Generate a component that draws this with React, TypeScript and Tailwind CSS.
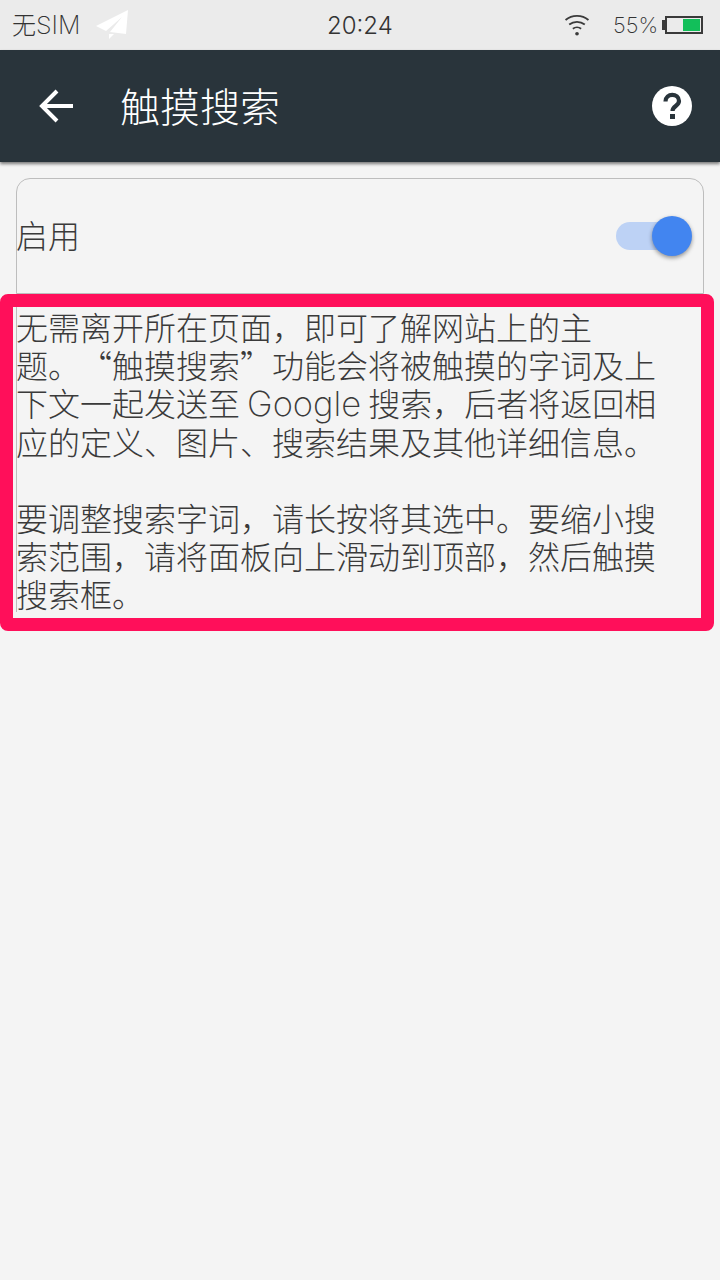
const cjk = "font-['Noto_Sans_CJK_SC','Roboto',sans-serif]";
const latin = "font-['Inter','Noto_Sans_CJK_SC',sans-serif]";

function Plane() {
  return (
    <svg width="34" height="30" viewBox="0 0 34 30" className="ml-[16px]">
      <path d="M32 0 L0 16 L10 21 L26 7 L14 22 L30 24 Z" fill="#ffffff" />
      <path d="M13 24 L18 24 L13 29 Z" fill="#ffffff" />
    </svg>
  );
}

function Wifi() {
  return (
    <svg width="26" height="22" viewBox="0 0 28 24" fill="none" stroke="#3a3a3a" strokeWidth="2">
      <path d="M1.5 6.5 C8.5 0.5 19.5 0.5 26.5 6.5" />
      <path d="M5.5 11.5 C10.5 7.5 17.5 7.5 22.5 11.5" />
      <path d="M9.5 16 C12 14 16 14 18.5 16" />
      <circle cx="14" cy="21.5" r="2" fill="#3a3a3a" stroke="none" />
    </svg>
  );
}

function Battery() {
  return (
    <div className="flex items-center ml-[4px]">
      <div className="w-[3px] h-[10px] bg-[#3a3a3a]" />
      <div className="w-[38px] h-[18px] border-[2px] border-[#3a3a3a] flex justify-end p-[1px]">
        <div className="w-[17px] h-full bg-[#12bf5a]" />
      </div>
    </div>
  );
}

export default function App() {
  return (
    <div lang="zh-CN" className={`relative w-[720px] h-[1280px] bg-[#f4f4f4] overflow-hidden [text-spacing-trim:space-all] ${cjk}`}>
      <div className="h-[50px] bg-[#ebebeb] flex items-center pl-[12px] pr-[17px] relative text-[#333333]">
        <div className="flex items-center w-[315px]">
          <span className="text-[24px] font-light leading-none">
            无<span className={`text-[25px] font-extralight ${latin}`}>SIM</span>
          </span>
          <Plane />
        </div>
        <span className={`text-[24px] font-light w-[64px] text-center mt-[2px] ${latin}`}>20:24</span>
        <div className="ml-auto flex items-center">
          <Wifi />
          <span className={`text-[22px] font-extralight ml-[23px] mt-[1px] ${latin}`}>55%</span>
          <Battery />
        </div>
      </div>
      <div className="h-[112px] bg-[#29343b] flex items-center shadow-[0_2px_3px_rgba(0,0,0,0.5)] relative">
        <svg width="36" height="36" viewBox="0 0 36 36" fill="none" stroke="#ffffff" strokeWidth="4" className="ml-[39px]">
          <path d="M34 18 H3" />
          <path d="M18 3 L3 18 L18 33" />
        </svg>
        <span className="text-[40px] font-extralight text-white ml-[45px] leading-none mb-[2px]">触摸搜索</span>
        <svg width="40" height="40" viewBox="0 0 40 40" className="ml-auto mr-[28px]">
          <circle cx="20" cy="20" r="20" fill="#ffffff" />
          <path d="M13.5 15.5 C13.5 6.5 27 7 27 15 C27 20 20.5 20 20.5 25" fill="none" stroke="#29343b" strokeWidth="4.2" />
          <rect x="18" y="28" width="5" height="5" fill="#29343b" />
        </svg>
      </div>
      <div className="ml-[16px] mt-[16px] w-[688px]">
        <div className="h-[116px] border border-[#bdbdbd] rounded-t-[14px] flex items-center justify-between pr-[11px]">
          <span className="text-[32px] font-light text-[#3a3a3a] -ml-px mb-[4px]">启用</span>
          <div className="relative w-[76px] h-[40px] flex items-center">
            <div className="w-[60px] h-[28px] rounded-full bg-[#bdd2f5]" />
            <div className="absolute right-0 top-0 w-[40px] h-[40px] rounded-full bg-[#4285f0] shadow-[0_2px_4px_rgba(0,0,0,0.4)]" />
          </div>
        </div>
        <div className="border-l border-[#bdbdbd] w-[660px] pt-[13px] text-[32px] leading-[38px] font-light text-[#3a3a3a]">
          <p className="-ml-px">
            无需离开所在页面，即可了解网站上的主<br />
            题。“触摸搜索”功能会将被触摸的字词及上<br />
            下文一起发送至 <span className={`font-extralight text-[34.5px] leading-none ${latin}`}>Google</span> 搜索，后者将返回相<br />
            应的定义、图片、搜索结果及其他详细信息。
          </p>
          <p className="-ml-px mt-[38px]">
            要调整搜索字词，请长按将其选中。要缩小搜<br />
            索范围，请将面板向上滑动到顶部，然后触摸<br />
            搜索框。
          </p>
        </div>
      </div>
      <div className="absolute left-0 top-[294px] w-[714px] h-[337px] border-[13px] border-[#ff0f5a] rounded-[8px]" />
    </div>
  );
}
